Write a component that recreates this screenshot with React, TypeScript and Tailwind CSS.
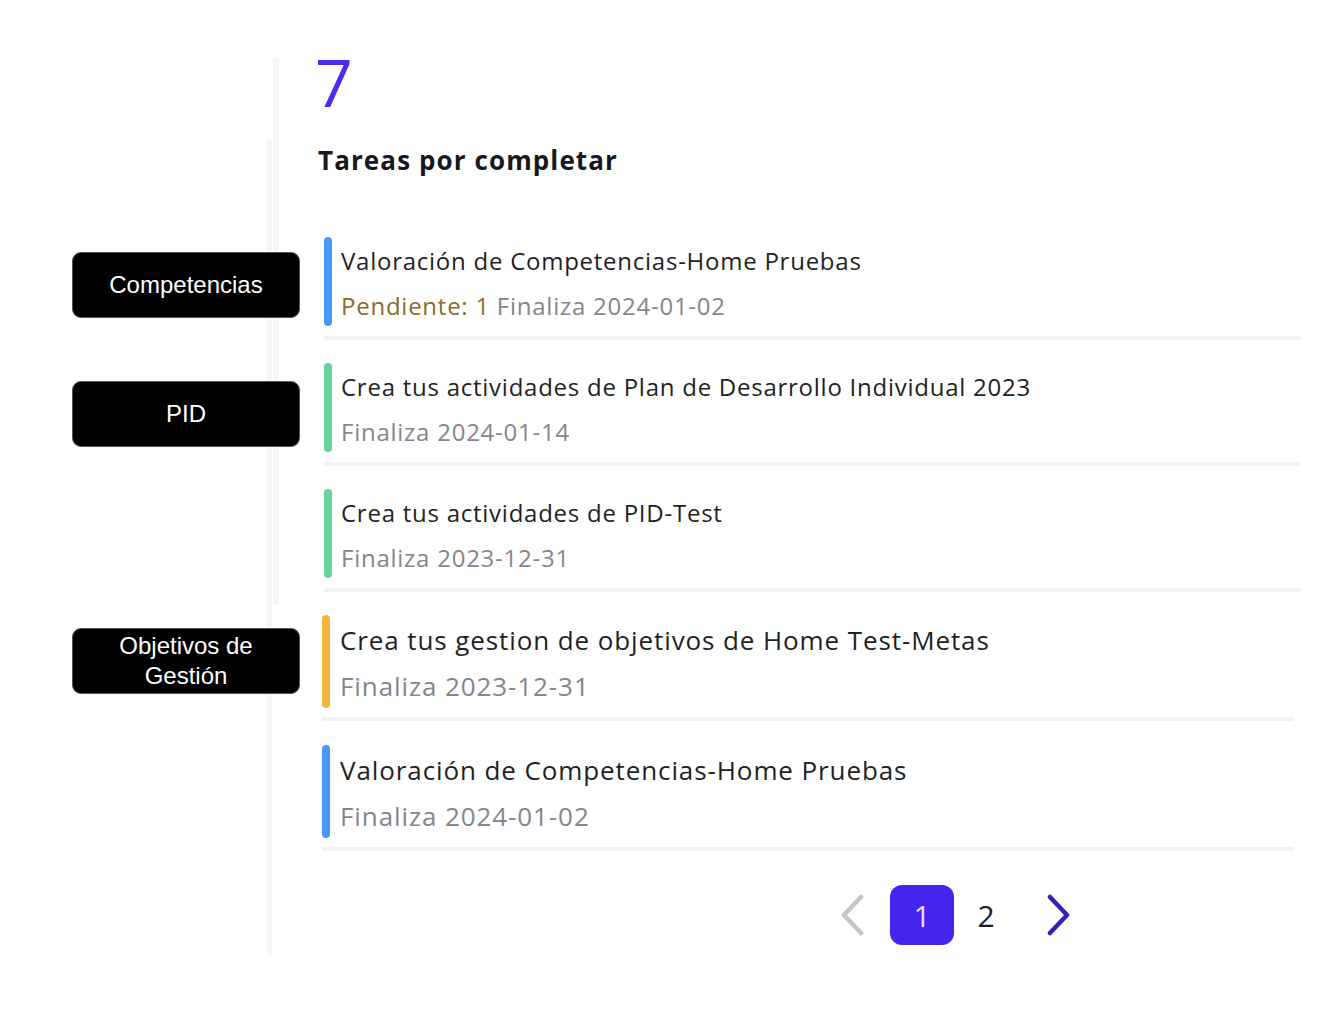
import React from "react";

type Task = {
  title: string;
  date: string;
  pending?: string;
  bar: string;
  big?: boolean;
};

const tasks: Task[] = [
  { title: "Valoración de Competencias-Home Pruebas", date: "Finaliza 2024-01-02", pending: "Pendiente: 1", bar: "bg-[#4799f7]" },
  { title: "Crea tus actividades de Plan de Desarrollo Individual 2023", date: "Finaliza 2024-01-14", bar: "bg-[#69d19d]" },
  { title: "Crea tus actividades de PID-Test", date: "Finaliza 2023-12-31", bar: "bg-[#69d19d]" },
  { title: "Crea tus gestion de objetivos de Home Test-Metas", date: "Finaliza 2023-12-31", bar: "bg-[#f5b43f]", big: true },
  { title: "Valoración de Competencias-Home Pruebas", date: "Finaliza 2024-01-02", bar: "bg-[#4799f7]", big: true },
];

function Label({ children, className }: { children: React.ReactNode; className?: string }) {
  return (
    <div
      className={
        "relative z-10 w-[228px] h-[66px] rounded-[9px] bg-black border border-[#555] flex items-center justify-center text-center text-white text-[24px] leading-[30px] font-['Liberation_Sans',Arial,sans-serif] " +
        (className || "")
      }
    >
      {children}
    </div>
  );
}

function TaskRow({ t }: { t: Task }) {
  return (
    <div className={t.big ? "ml-[-2px] mb-[24px]" : "mb-[23px]"}>
      <div className={t.big ? "flex h-[93px]" : "flex h-[89px]"}>
        <div className={"w-[8px] rounded-full " + t.bar} />
        <div className={t.big ? "pl-[10px] flex flex-col" : "pl-[9px] flex flex-col"}>
          <div
            className={
              t.big
                ? "mt-[9px] text-[26px] leading-[32px] tracking-[0.9px] text-[#1f1f24]"
                : "mt-[8px] text-[24px] leading-[32px] tracking-[0.75px] text-[#1f1f24]"
            }
          >
            {t.title}
          </div>
          <div
            className={
              t.big
                ? "mt-[14px] text-[26px] leading-[32px] tracking-[0.9px] text-[#85858b]"
                : "mt-[13px] text-[24px] leading-[32px] tracking-[0.75px] text-[#85858b]"
            }
          >
            {t.pending && <span className="text-[#8b6a2b]">{t.pending} </span>}
            {t.date}
          </div>
        </div>
      </div>
      <div
        className={
          t.big
            ? "mt-[9px] h-[4px] w-[971px] bg-[#f1f2f4]"
            : "mt-[10px] h-[4px] w-[977px] bg-[#f1f2f4]"
        }
      />
    </div>
  );
}

export default function App() {
  return (
    <div className="w-[1328px] h-[1022px] bg-white flex font-['Open_Sans','Noto_Sans',sans-serif]">
      <div className="w-[266px] pl-[72px] flex flex-col">
        <Label className="mt-[252px]">Competencias</Label>
        <Label className="mt-[63px]">PID</Label>
        <Label className="mt-[181px]">
          Objetivos de
          <br />
          Gestión
        </Label>
      </div>

      <div className="flex items-start gap-[1px]">
        <div className="w-[6px] mt-[140px] h-[815px] bg-[#f7f7f8]" />
        <div className="w-[6px] mt-[58px] h-[547px] bg-[#f6f6f7]" />
      </div>

      <div className="flex-1 flex flex-col pl-[45px]">
        <div className="ml-[-9px] mt-[46px] h-[70px] text-[66px] leading-[70px] font-normal text-[#4b2cf0]">7</div>
        <h1 className="ml-[-6px] mt-[26px] text-[26px] leading-[36px] font-bold tracking-[1.1px] text-[#17171f]">
          Tareas por completar
        </h1>
        <div className="mt-[59px] flex flex-col">
          {tasks.map((t, i) => (
            <TaskRow key={i} t={t} />
          ))}
        </div>

        <div className="mt-[10px] flex items-center ml-[515px]">
          <svg width="26" height="42" viewBox="0 0 26 42" fill="none" stroke="#c6c6c9" strokeWidth="4.5" strokeLinecap="round" strokeLinejoin="round">
            <polyline points="22,3 5,21 22,39" />
          </svg>
          <div className="ml-[25px] w-[64px] h-[60px] rounded-[12px] bg-[#4424ee] flex items-center justify-center text-[30px] text-[#e4defd]">
            1
          </div>
          <div className="ml-[22px] w-[20px] text-center text-[30px] text-[#1b1b1f]">2</div>
          <svg className="ml-[50px]" width="26" height="42" viewBox="0 0 26 42" fill="none" stroke="#3a1eb6" strokeWidth="4.5" strokeLinecap="round" strokeLinejoin="round">
            <polyline points="4,3 21,21 4,39" />
          </svg>
        </div>
      </div>
    </div>
  );
}
